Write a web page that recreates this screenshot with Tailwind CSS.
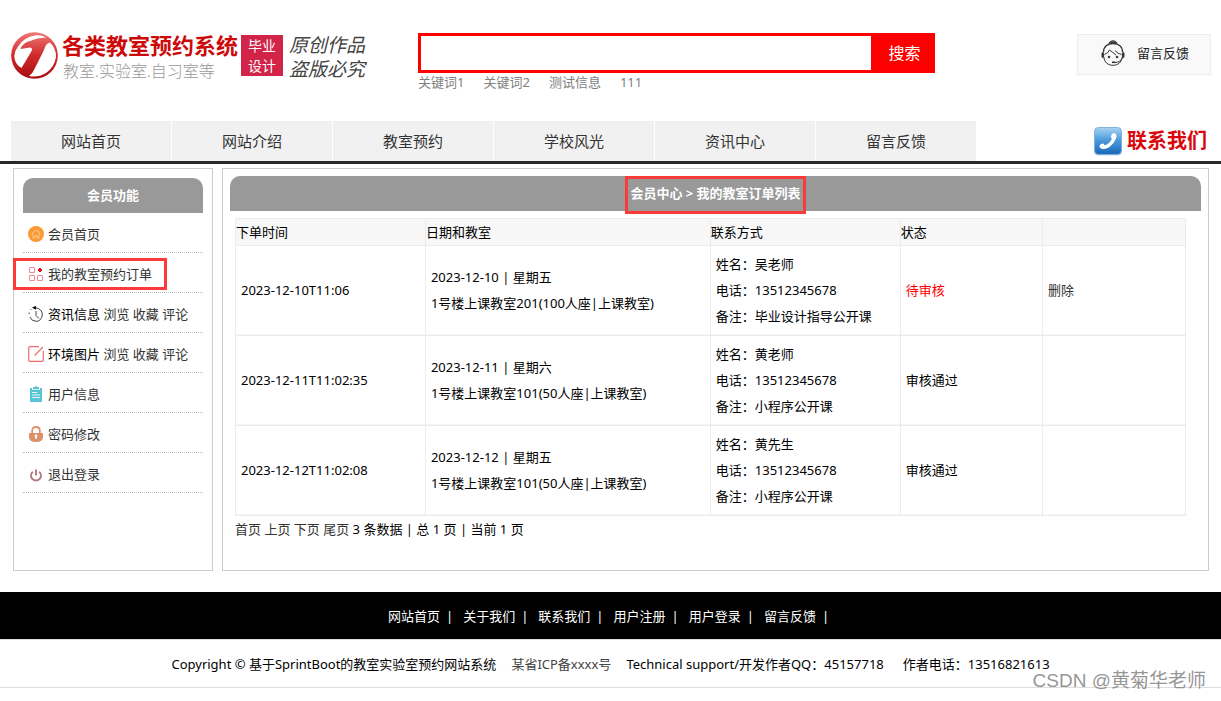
<!DOCTYPE html>
<html lang="zh-CN">
<head>
<meta charset="utf-8">
<title>各类教室预约系统</title>
<script src="https://cdn.jsdelivr.net/npm/@tailwindcss/browser@4"></script>
</head>
<body class="bg-white font-['Noto_Sans','Noto_Sans_CJK_SC',sans-serif] text-[13px] leading-[26px] text-black">
<header>
  <div class="flex h-[121px] items-start px-[10px] pt-8">
    <a href="#" class="flex w-[408px] shrink-0 items-start" aria-label="各类教室预约系统">
      <svg class="h-12 w-12 shrink-0" viewBox="0 0 48 48" aria-hidden="true">
        <defs>
          <linearGradient id="ring" x1="0" y1="0" x2="0" y2="1"><stop offset="0" stop-color="#ee7a78"/><stop offset=".5" stop-color="#cf2a2a"/><stop offset="1" stop-color="#a80c10"/></linearGradient>
        </defs>
        <circle cx="24.500" cy="23.500" r="23.300" fill="url(#ring)"/>
        <path d="M8 14.500Q14 5 26 3.300Q32 2.800 36 5.500Q27 6 21 8.700Q15 10 13 13Q11 14.500 10.500 17L20 15.500Q23.500 16 21 20L11.500 36Q4.500 32 4.300 24Q4.500 19 8 14.500Z" fill="#fff"/>
        <path d="M36 13Q38 10.500 40 10.500Q46.500 17 46 25Q44.500 35 36 41Q28 46 19 44Q23 41 25 36L33 20Z" fill="#fff"/>
      </svg>
      <span class="ml-1 flex flex-col whitespace-nowrap">
        <span class="text-[22px] leading-[26px] font-bold text-[#cc0a0a]">各类教室预约系统</span>
        <span class="pl-px text-[16px] leading-[26px] font-light text-[#999]">教室.实验室.自习室等</span>
      </span>
      <span class="mt-[3px] ml-[3px] flex h-[41px] w-[42px] shrink-0 flex-col items-center justify-center bg-[#d22349] text-[14px] leading-[20px] text-white"><span>毕业</span><span>设计</span></span>
      <span class="ml-[6px] flex flex-col font-['Noto_Sans_CJK_SC',sans-serif] text-[19px] leading-[24px] whitespace-nowrap text-[#444] italic"><span>原创作品</span><span>盗版必究</span></span>
    </a>
    <div class="mt-px max-w-[517px] flex-1">
      <form class="flex h-10" onsubmit="return false">
        <input type="text" aria-label="搜索关键词" class="min-w-0 flex-1 border-[3px] border-[#f00] bg-white px-2 text-sm outline-none">
        <button type="submit" class="w-[61px] shrink-0 bg-[#f00] text-[16px] text-white">搜索</button>
      </form>
      <nav class="flex gap-[19px] leading-[18px] text-[#808080]">
        <a href="#">关键词1</a><a href="#">关键词2</a><a href="#">测试信息</a><a href="#">111</a>
      </nav>
    </div>
    <a href="#" class="mt-[2px] ml-auto flex h-[41px] w-[134px] items-center gap-3 border border-[#eee] bg-[#f9f9f9] pb-[3px] pl-[23px] text-[#222]">
      <svg class="h-[26px] w-[24px]" viewBox="0 0 24 26" fill="none" stroke="#333" aria-hidden="true">
        <path d="M8 3Q9 .8 12 .8T16 3Q12 1.600 8 3Z" fill="#777"/>
        <path d="M2.500 12C2.500 6.500 6.500 3.500 12 3.500S21.500 6.500 21.500 12" stroke-width="1.300"/>
        <path d="M2.800 17C3.500 22.500 7 25.300 12 25.300S20.500 22.500 21.200 17"/>
        <path d="M3.500 14.500Q7.500 13 8.500 10 12 12.500 15 15M14 10.500Q17 14 20.500 14.500"/>
        <rect x="1" y="12.500" width="1.600" height="5" rx=".8" fill="#333"/><rect x="21.400" y="12.500" width="1.600" height="5" rx=".8" fill="#333"/>
        <circle cx="8" cy="17" r=".9" fill="#333"/><circle cx="16" cy="17" r=".9" fill="#333"/>
        <path d="M21.500 18Q19 22.500 14 22.500"/><path d="M11 22.300h3" stroke-width="1.600"/>
      </svg>
      <span>留言反馈</span>
    </a>
  </div>
  <div class="flex border-b-[3px] border-[#2a2828] pr-[14px] pl-[11px]">
    <nav class="flex h-10 max-w-[965px] flex-1 gap-px text-[15px] leading-[40px] text-[#333]">
      <a href="#" class="flex-1 bg-[#f1f1f1] text-center">网站首页</a>
      <a href="#" class="flex-1 bg-[#f1f1f1] text-center">网站介绍</a>
      <a href="#" class="flex-1 bg-[#f1f1f1] text-center">教室预约</a>
      <a href="#" class="flex-1 bg-[#f1f1f1] text-center">学校风光</a>
      <a href="#" class="flex-1 bg-[#f1f1f1] text-center">资讯中心</a>
      <a href="#" class="flex-1 bg-[#f1f1f1] text-center">留言反馈</a>
    </nav>
    <a href="#" class="ml-auto flex items-center gap-[5px] text-[20px] font-bold whitespace-nowrap text-[#d9060c]">
      <svg class="h-[29px] w-[28px]" viewBox="0 0 28 29" aria-hidden="true">
        <defs><linearGradient id="phone" x1="0" y1="0" x2="0" y2="1"><stop offset="0" stop-color="#a9d2f1"/><stop offset=".45" stop-color="#4f9ddd"/><stop offset="1" stop-color="#1766b8"/></linearGradient></defs>
        <rect x=".5" y="1.500" width="27" height="27" rx="4" fill="#c9d4df"/>
        <rect x=".5" y=".5" width="27" height="27" rx="4" fill="url(#phone)" stroke="#7fb2de"/>
        <path d="M18.500 6.500Q20 5.500 21.500 6.500 23 8 22 11.500 20 16.500 15.500 20 10.500 23 7 21.500 5 20.500 5.500 18.500 6.500 16.500 9 16.500 10.500 16.800 10.800 18.500 16 16.500 18 11.500 16.800 11 17 9.500 17.200 7.500 18.500 6.500Z" fill="#fff"/>
      </svg>
      <span>联系我们</span>
    </a>
  </div>
</header>

<main class="flex items-stretch gap-[9px] pt-1 pr-3 pl-[13px]">
  <aside class="w-[200px] shrink-0 border border-[#ccc] p-[9px]">
    <h2 class="h-[35px] rounded-t-[10px] bg-[#999] text-center leading-[35px] font-bold text-white">会员功能</h2>
    <ul class="text-[#333]">
      <li class="flex h-10 items-center gap-1 border-b border-dotted border-[#bbb] pt-[2px] pl-[5px]">
        <svg class="h-4 w-4" viewBox="0 0 16 16" aria-hidden="true"><circle cx="8" cy="8" r="8" fill="#fb9a33"/><path d="M3.500 8 8 4l4.500 4M5 7.500V12h2V9.500h2V12h2V7.500M10.500 4.500v2" fill="none" stroke="#fdc98c"/></svg>
        <a href="#">会员首页</a>
      </li>
      <li class="relative flex h-10 items-center gap-1 border-b border-dotted border-[#bbb] pt-[2px] pl-[5px]">
        <svg class="h-4 w-4" viewBox="0 0 16 16" fill="none" stroke="#f08a94" aria-hidden="true"><path d="M1.500 1.500h5v5h-5zM1.500 9.500h5v5h-5zM9.500 9.500h5v5h-5z"/><path d="m12 2 2 2-2 2-2-2z" fill="#e0101c" stroke="#e0101c" stroke-linejoin="round"/></svg>
        <a href="#">我的教室预约订单</a>
        <span class="pointer-events-none absolute top-[5px] -left-[10px] h-8 w-[154px] border-[3px] border-[#fb3a3a]"></span>
      </li>
      <li class="flex h-10 items-center gap-1 border-b border-dotted border-[#bbb] pt-[2px] pl-[5px]">
        <svg class="h-4 w-4" viewBox="0 0 16 16" fill="none" stroke="#444" aria-hidden="true"><path d="M7 1.700Q14.300 2.500 14.300 9 13.500 15.300 8 15.300 3.500 15 1.800 11"/><path d="M1.200 6.500v1.500M2.500 4l.6-.8"/><path d="m4 1.700 4-2v4z" fill="#111" stroke="none"/><path d="M8 5v4.500l3 3"/></svg>
        <span><span class="text-black">资讯信息</span> <a href="#">浏览</a> <a href="#">收藏</a> <a href="#">评论</a></span>
      </li>
      <li class="flex h-10 items-center gap-1 border-b border-dotted border-[#bbb] pt-[2px] pl-[5px]">
        <svg class="h-4 w-4" viewBox="0 0 16 16" fill="none" stroke="#ef6a6e" stroke-width="1.200" aria-hidden="true"><path d="M11 .7H2Q.7.7.7 2v12q0 1.300 1.300 1.300h12q1.300 0 1.300-1.300V5M6.500 9.500 15 1"/></svg>
        <span><span class="text-black">环境图片</span> <a href="#">浏览</a> <a href="#">收藏</a> <a href="#">评论</a></span>
      </li>
      <li class="flex h-10 items-center gap-1 border-b border-dotted border-[#bbb] pt-[2px] pl-[5px]">
        <svg class="h-4 w-4" viewBox="0 0 16 16" aria-hidden="true"><path d="M2 2h2v2h8V2h2v14H2z" fill="#57c4d8"/><path d="M5 1h2Q8-.8 9 1h2v2.200H5z" fill="#57c4d8"/><path d="M4 6.500h5M4 9h8M4 11.500h8" stroke="#e3f6f9"/></svg>
        <a href="#">用户信息</a>
      </li>
      <li class="flex h-10 items-center gap-1 border-b border-dotted border-[#bbb] pt-[2px] pl-[5px]">
        <svg class="h-4 w-4" viewBox="0 0 16 16" aria-hidden="true"><path d="M4.200 8V4.500Q4.200 1 8 1t3.800 3.500V8" fill="none" stroke="#dc9067" stroke-width="1.800"/><path d="M1 7h14v4q0 5-7 5t-7-5z" fill="#dc9067"/><circle cx="8" cy="10" r="1.400" fill="#fff"/><path d="M7.300 10h1.400v3H7.300z" fill="#fff"/></svg>
        <a href="#">密码修改</a>
      </li>
      <li class="flex h-10 items-center gap-1 border-b border-dotted border-[#bbb] pt-[2px] pl-[5px]">
        <svg class="h-4 w-4" viewBox="0 0 16 16" fill="none" stroke="#b27b7d" stroke-width="1.900" aria-hidden="true"><path d="M4.800 5.700A5 5 0 1 0 11.200 5.700M8 3.500v6"/></svg>
        <a href="#">退出登录</a>
      </li>
    </ul>
  </aside>

  <section class="min-w-0 flex-1 border border-[#ccc] px-[7px] pt-[7px] pb-[28px]">
    <h1 class="h-[35px] rounded-t-[10px] bg-[#999] text-center leading-[35px] font-bold text-white">
      <span class="relative inline-block">会员中心 &gt; 我的教室订单列表<span class="pointer-events-none absolute inset-x-[-5px] top-0 h-[38px] border-[3px] border-[#fb3a3a]"></span></span>
    </h1>
    <div class="pt-[7px] pl-[5px]">
      <table class="w-[98.400%] table-fixed border-separate border-spacing-0 border-r border-b border-[#ececec]">
        <colgroup><col class="w-[20%]"><col class="w-[30%]"><col class="w-[20%]"><col class="w-[15%]"><col class="w-[15%]"></colgroup>
        <thead>
          <tr class="bg-[#f7f7f7] text-left">
            <th class="h-[27px] border-t border-l border-[#ececec] font-normal">下单时间</th>
            <th class="border-t border-l border-[#ececec] font-normal">日期和教室</th>
            <th class="border-t border-l border-[#ececec] font-normal">联系方式</th>
            <th class="border-t border-l border-[#ececec] font-normal">状态</th>
            <th class="border-t border-l border-[#ececec]" aria-label="操作"></th>
          </tr>
        </thead>
        <tbody>
          <tr>
            <td class="border-t border-b border-l border-[#ececec] p-[5px] [border-bottom-style:dotted]">2023-12-10T11:06</td>
            <td class="border-t border-b border-l border-[#ececec] p-[5px] [border-bottom-style:dotted]">2023-12-10 | 星期五<br>1号楼上课教室201(100人座|上课教室)</td>
            <td class="border-t border-b border-l border-[#ececec] p-[5px] [border-bottom-style:dotted]">姓名：吴老师<br>电话：13512345678<br>备注：毕业设计指导公开课</td>
            <td class="border-t border-b border-l border-[#ececec] p-[5px] text-[#f00] [border-bottom-style:dotted]">待审核</td>
            <td class="border-t border-b border-l border-[#ececec] p-[5px] [border-bottom-style:dotted]"><a href="#" class="text-[#333]">删除</a></td>
          </tr>
          <tr>
            <td class="border-t border-b border-l border-[#ececec] p-[5px] [border-bottom-style:dotted]">2023-12-11T11:02:35</td>
            <td class="border-t border-b border-l border-[#ececec] p-[5px] [border-bottom-style:dotted]">2023-12-11 | 星期六<br>1号楼上课教室101(50人座|上课教室)</td>
            <td class="border-t border-b border-l border-[#ececec] p-[5px] [border-bottom-style:dotted]">姓名：黄老师<br>电话：13512345678<br>备注：小程序公开课</td>
            <td class="border-t border-b border-l border-[#ececec] p-[5px] [border-bottom-style:dotted]">审核通过</td>
            <td class="border-t border-b border-l border-[#ececec] p-[5px] [border-bottom-style:dotted]"></td>
          </tr>
          <tr>
            <td class="border-t border-b border-l border-[#ececec] p-[5px] [border-bottom-style:dotted]">2023-12-12T11:02:08</td>
            <td class="border-t border-b border-l border-[#ececec] p-[5px] [border-bottom-style:dotted]">2023-12-12 | 星期五<br>1号楼上课教室101(50人座|上课教室)</td>
            <td class="border-t border-b border-l border-[#ececec] p-[5px] [border-bottom-style:dotted]">姓名：黄先生<br>电话：13512345678<br>备注：小程序公开课</td>
            <td class="border-t border-b border-l border-[#ececec] p-[5px] [border-bottom-style:dotted]">审核通过</td>
            <td class="border-t border-b border-l border-[#ececec] p-[5px] [border-bottom-style:dotted]"></td>
          </tr>
        </tbody>
      </table>
      <p><a href="#" class="text-[#333]">首页</a> <a href="#" class="text-[#333]">上页</a> <a href="#" class="text-[#333]">下页</a> <a href="#" class="text-[#333]">尾页</a> 3 条数据 | 总 1 页 | 当前 1 页</p>
    </div>
  </section>
</main>

<footer class="relative mt-[21px] pb-[13px]">
  <nav class="flex h-[47px] items-center justify-center gap-[10px] bg-black pr-[4px] text-white">
    <span class="flex gap-[6px]"><a href="#">网站首页</a><span>|</span></span>
    <span class="flex gap-[6px]"><a href="#">关于我们</a><span>|</span></span>
    <span class="flex gap-[6px]"><a href="#">联系我们</a><span>|</span></span>
    <span class="flex gap-[6px]"><a href="#">用户注册</a><span>|</span></span>
    <span class="flex gap-[6px]"><a href="#">用户登录</a><span>|</span></span>
    <span class="flex gap-[6px]"><a href="#">留言反馈</a><span>|</span></span>
  </nav>
  <div class="flex h-[49px] items-center justify-center border-y border-[#ddd] whitespace-nowrap">
    <span>Copyright © 基于SprintBoot的教室实验室预约网站系统</span>
    <a href="#" class="ml-[15px] text-[#444]">某省ICP备xxxx号</a>
    <span class="ml-[15px]">Technical support/开发作者QQ：45157718</span>
    <span class="ml-[19px]">作者电话：13516821613</span>
  </div>
  <span class="absolute top-[76px] right-[15px] font-['Liberation_Sans','Noto_Sans_CJK_SC',sans-serif] text-[19px] whitespace-nowrap text-[#888]/90">CSDN @黄菊华老师</span>
</footer>
</body>
</html>
